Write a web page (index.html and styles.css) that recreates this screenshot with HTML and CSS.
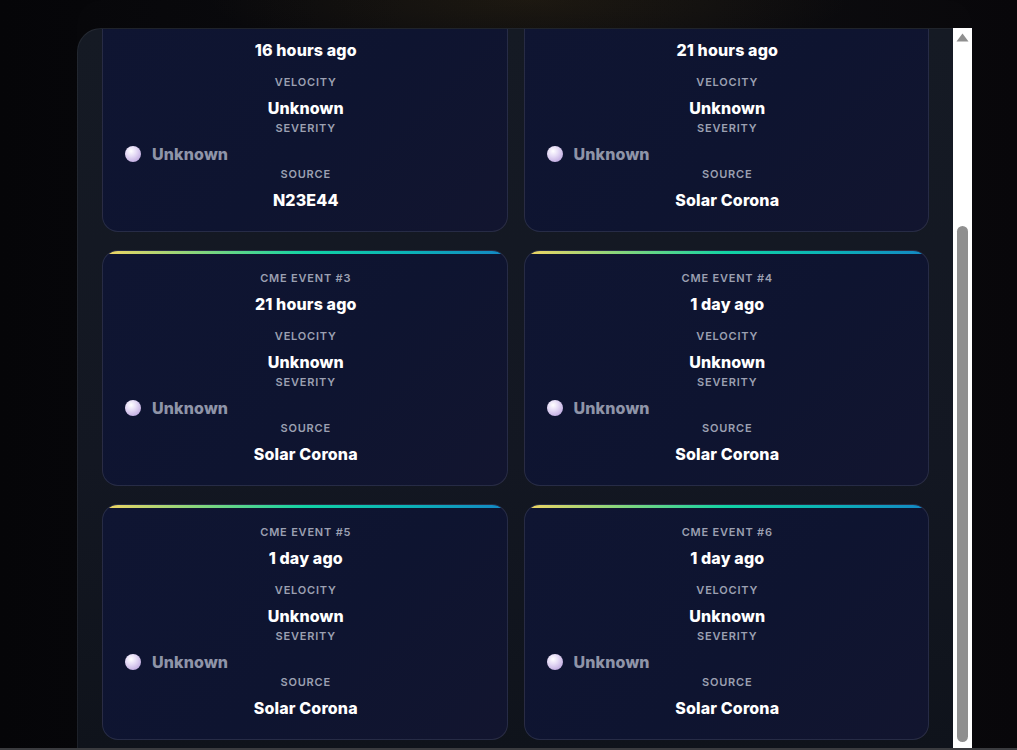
FILE: index.html
```html
<!DOCTYPE html>
<html lang="en">
<head>
<meta charset="utf-8">
<title>CME Events</title>
<link rel="stylesheet" href="styles.css">
</head>
<body>
<div class="page">
  <section class="shell">
    <div class="panel">
      <div class="feed">
        <div class="grid">
          <article class="card">
            <div class="label">CME Event #1</div>
            <div class="value time">16 hours ago</div>
            <div class="label">Velocity</div>
            <div class="value">Unknown</div>
            <div class="label">Severity</div>
            <div class="severity"><span class="dot"></span><span class="sev-text">Unknown</span></div>
            <div class="label">Source</div>
            <div class="value">N23E44</div>
          </article>
          <article class="card">
            <div class="label">CME Event #2</div>
            <div class="value time">21 hours ago</div>
            <div class="label">Velocity</div>
            <div class="value">Unknown</div>
            <div class="label">Severity</div>
            <div class="severity"><span class="dot"></span><span class="sev-text">Unknown</span></div>
            <div class="label">Source</div>
            <div class="value">Solar Corona</div>
          </article>
          <article class="card">
            <div class="label">CME Event #3</div>
            <div class="value time">21 hours ago</div>
            <div class="label">Velocity</div>
            <div class="value">Unknown</div>
            <div class="label">Severity</div>
            <div class="severity"><span class="dot"></span><span class="sev-text">Unknown</span></div>
            <div class="label">Source</div>
            <div class="value">Solar Corona</div>
          </article>
          <article class="card">
            <div class="label">CME Event #4</div>
            <div class="value time">1 day ago</div>
            <div class="label">Velocity</div>
            <div class="value">Unknown</div>
            <div class="label">Severity</div>
            <div class="severity"><span class="dot"></span><span class="sev-text">Unknown</span></div>
            <div class="label">Source</div>
            <div class="value">Solar Corona</div>
          </article>
          <article class="card">
            <div class="label">CME Event #5</div>
            <div class="value time">1 day ago</div>
            <div class="label">Velocity</div>
            <div class="value">Unknown</div>
            <div class="label">Severity</div>
            <div class="severity"><span class="dot"></span><span class="sev-text">Unknown</span></div>
            <div class="label">Source</div>
            <div class="value">Solar Corona</div>
          </article>
          <article class="card">
            <div class="label">CME Event #6</div>
            <div class="value time">1 day ago</div>
            <div class="label">Velocity</div>
            <div class="value">Unknown</div>
            <div class="label">Severity</div>
            <div class="severity"><span class="dot"></span><span class="sev-text">Unknown</span></div>
            <div class="label">Source</div>
            <div class="value">Solar Corona</div>
          </article>
        </div>
      </div>
      <div class="scrollbar" aria-hidden="true">
        <div class="sb-arrow">
          <svg width="13" height="9" viewBox="0 0 13 9"><path d="M6.5 0.5 L12.5 8.5 L0.5 8.5 Z" fill="#8f8f8f"/></svg>
        </div>
        <div class="sb-thumb"></div>
      </div>
    </div>
  </section>
</div>
<div class="bottom-line"></div>
<script src="script.js"></script>
</body>
</html>
```

FILE: styles.css
```css
* { box-sizing: border-box; }

html, body {
  margin: 0;
  height: 100%;
}

body {
  overflow: hidden;
  background:
    radial-gradient(ellipse 320px 60px at 52% 0%, rgba(120, 92, 30, 0.16), rgba(0,0,0,0) 100%),
    linear-gradient(90deg, #050508 0%, #0a0a0d 40%, #0b0b0e 70%, #08070a 100%);
  font-family: "Inter", "Open Sans", "DejaVu Sans", sans-serif;
  color: #fff;
}

.page {
  height: 100%;
  padding: 0 45px 0 77px;
}

.shell {
  height: 100%;
  padding-top: 28px;
  border-radius: 24px 24px 0 0;
  background: rgba(255, 255, 255, 0.008);
}

.panel {
  display: flex;
  height: 100%;
}

.feed {
  flex: 1;
  min-width: 0;
  height: 100%;
  overflow: hidden;
  border-top: 1px solid rgba(255, 255, 255, 0.07);
  border-left: 1px solid rgba(255, 255, 255, 0.06);
  border-top-left-radius: 24px;
  background: linear-gradient(180deg, #151a24 0%, #131722 60%, #0f131b 100%);
  padding: 24px 24px 24px 24px;
}

.grid {
  display: grid;
  grid-template-columns: 1fr 1fr;
  column-gap: 16px;
  row-gap: 18px;
}

.card {
  position: relative;
  overflow: hidden;
  display: flex;
  flex-direction: column;
  align-items: center;
  height: 236px;
  padding: 19px 20px 19px 22px;
  border: 1px solid rgba(255, 255, 255, 0.1);
  border-radius: 16px;
  background: linear-gradient(135deg, #0f1532 0%, #0e1430 55%, #12152f 100%);
}

.card::before {
  content: "";
  position: absolute;
  top: 0;
  left: 0;
  right: 0;
  height: 3px;
  background: linear-gradient(90deg, #f2d463 0%, #7fd67e 25%, #12d3a4 50%, #0bb3b6 75%, #1486c4 100%);
}

.label {
  font-size: 11px;
  line-height: 16px;
  font-weight: 600;
  letter-spacing: 0.8px;
  text-transform: uppercase;
  color: #9ca0b2;
}

.value {
  margin-top: 6px;
  font-size: 16px;
  line-height: 24px;
  font-weight: 800;
  letter-spacing: 0.15px;
  color: #fff;
}

.time {
  margin-bottom: 12px;
}

.severity {
  align-self: stretch;
  display: flex;
  align-items: center;
  gap: 11px;
  margin-top: 6px;
  height: 24px;
}

.dot {
  width: 16px;
  height: 16px;
  border-radius: 50%;
  background: radial-gradient(circle at 38% 32%, #ffffff 0%, #e6dcf6 35%, #c4b0e2 75%, #a991cf 100%);
  flex: none;
}

.sev-text {
  font-size: 16px;
  font-weight: 800;
  letter-spacing: 0.15px;
  color: #8f94a8;
}

.scrollbar {
  flex: none;
  width: 19px;
  height: 100%;
  background: #ffffff;
  display: flex;
  flex-direction: column;
  align-items: center;
}

.sb-arrow {
  height: 18px;
  display: flex;
  align-items: center;
  justify-content: center;
}

.sb-arrow svg {
  display: block;
}

.sb-thumb {
  margin-top: 180px;
  width: 11px;
  height: 516px;
  border-radius: 6px;
  background: #8f8f8f;
}

.bottom-line {
  position: fixed;
  left: 0;
  right: 0;
  bottom: 0;
  height: 2px;
  background: #3a3b3f;
}
```

FILE: script.js
```js
var feed = document.querySelector('.feed');
var first = document.querySelector('.card');
feed.scrollTop += first.getBoundingClientRect().top + 4;
```
